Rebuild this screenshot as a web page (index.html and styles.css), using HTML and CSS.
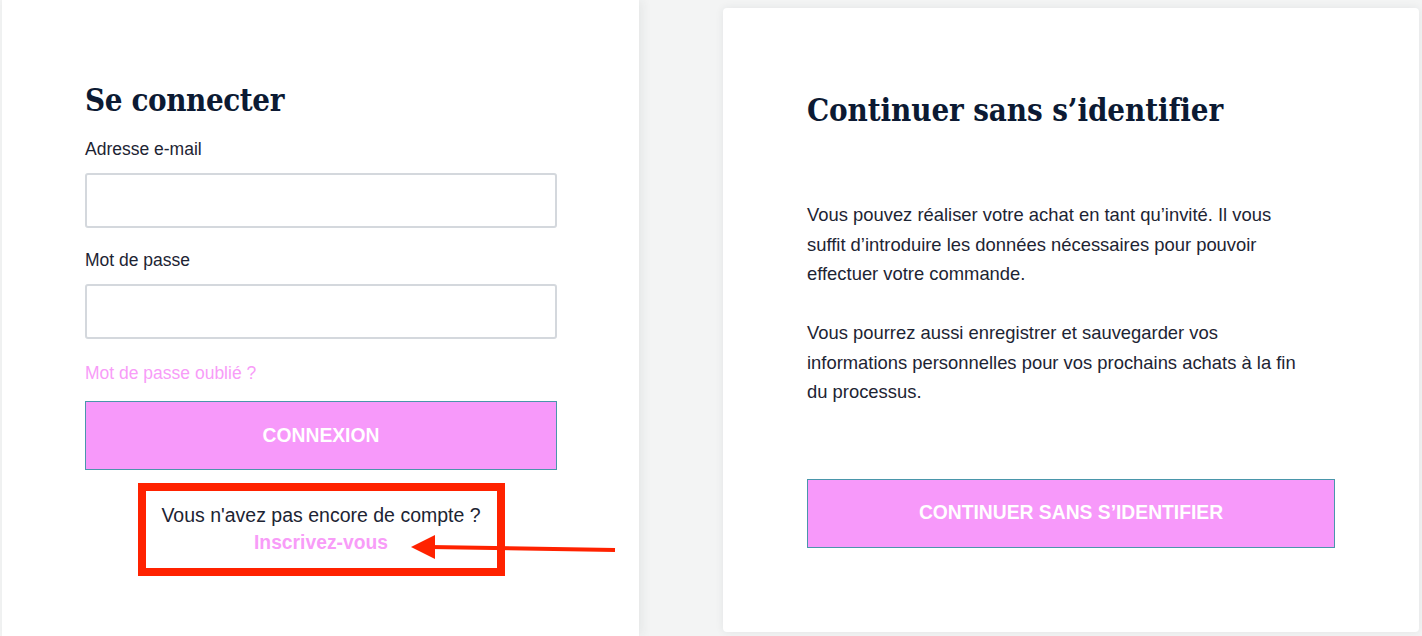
FILE: index.html
```html
<!DOCTYPE html>
<html lang="fr">
<head>
<meta charset="utf-8">
<title>Connexion</title>
<link rel="stylesheet" href="styles.css">
</head>
<body>
<div class="page">
  <section class="login">
    <div class="login-inner">
      <h2 class="title">Se connecter</h2>
      <label class="label" for="email">Adresse e-mail</label>
      <input class="field" id="email" type="email">
      <label class="label" for="pwd">Mot de passe</label>
      <input class="field" id="pwd" type="password">
      <a class="forgot" href="#">Mot de passe oublié ?</a>
      <button class="btn btn-login" type="button">CONNEXION</button>
      <div class="signup-wrap">
        <div class="signup">
          <p class="signup-text">Vous n'avez pas encore de compte ?</p>
          <a class="signup-link" href="#">Inscrivez-vous</a>
        </div>
      </div>
    </div>
    <svg class="arrow" width="220" height="30" viewBox="0 0 220 30" aria-hidden="true">
      <line x1="22" y1="14" x2="207" y2="17" stroke="#ff2200" stroke-width="4"/>
      <polygon points="3,14 27,2 27,26" fill="#ff2200"/>
    </svg>
  </section>
  <section class="guest-area">
    <div class="guest">
      <h2 class="title title-guest">Continuer sans s’identifier</h2>
      <p class="text">Vous pouvez réaliser votre achat en tant qu’invité. Il vous suffit d’introduire les données nécessaires pour pouvoir effectuer votre commande.</p>
      <p class="text">Vous pourrez aussi enregistrer et sauvegarder vos informations personnelles pour vos prochains achats à la fin du processus.</p>
      <button class="btn btn-guest" type="button">CONTINUER SANS S’IDENTIFIER</button>
    </div>
  </section>
</div>
</body>
</html>
```

FILE: styles.css
```css
* { box-sizing: border-box; }
html, body { margin: 0; padding: 0; }
body {
  background: #f3f4f4;
  font-family: "Liberation Sans", Arial, sans-serif;
  color: #1d2433;
  width: 1422px;
  height: 636px;
  overflow: hidden;
}
.page {
  display: flex;
  height: 636px;
}
.login {
  position: relative;
  width: 639px;
  margin-left: 2px;
  height: 636px;
  background: #ffffff;
  box-shadow: 3px 0 10px rgba(40, 50, 60, 0.07);
  z-index: 1;
}
.login-inner {
  display: flex;
  flex-direction: column;
  align-items: flex-start;
  width: 472px;
  margin-left: 83px;
  padding-top: 82px;
}
.title {
  margin: 0;
  font-family: "DejaVu Serif", "Liberation Serif", serif;
  font-stretch: condensed;
  font-weight: 700;
  font-size: 31px;
  line-height: 36px;
  color: #0c1a33;
  letter-spacing: -0.4px;
}
.label {
  margin-top: 19px;
  font-size: 17.5px;
  line-height: 24px;
  color: #1d2433;
}
.label + .field { margin-top: 12px; }
.field {
  display: block;
  width: 472px;
  height: 55px;
  border: 2px solid #d4d8dd;
  border-radius: 3px;
  background: #fff;
  font: inherit;
}
.field + .label { margin-top: 20px; }
.forgot {
  margin-top: 22px;
  font-size: 17.5px;
  line-height: 24px;
  color: #f89cf8;
  text-decoration: none;
}
.btn {
  display: block;
  height: 69px;
  border: 1px solid #4a96ab;
  background: #f799fa;
  color: #ffffff;
  font-family: "Liberation Sans", Arial, sans-serif;
  font-weight: 700;
  font-size: 19.3px;
  cursor: pointer;
}
.btn-login {
  width: 472px;
  margin-top: 16px;
}
.signup-wrap {
  width: 472px;
  display: flex;
  justify-content: center;
  margin-top: 13px;
}
.signup {
  border: 8px solid #ff2200;
  padding: 10px 8px 11px;
  text-align: center;
  width: 367px;
}
.signup-text {
  margin: 0;
  font-size: 19.5px;
  line-height: 28px;
  color: #1d2433;
  white-space: nowrap;
}
.signup-link {
  display: block;
  font-weight: 700;
  font-size: 19.3px;
  line-height: 28px;
  color: #f89cf8;
  text-decoration: none;
}
.arrow {
  position: absolute;
  left: 406px;
  top: 533px;
}
.guest-area {
  flex: 1;
  padding: 8px 3px 4px 84px;
}
.guest {
  height: 100%;
  background: #fff;
  border-radius: 4px;
  box-shadow: 0 0 8px rgba(40, 50, 60, 0.08);
  padding: 84px 84px 0;
}
.title-guest {
  letter-spacing: -0.1px;
}
.text {
  margin: 0;
  max-width: 500px;
  font-size: 18.4px;
  line-height: 29.5px;
  color: #1d2433;
}
.title-guest + .text { margin-top: 72px; }
.text + .text { margin-top: 29.5px; }
.btn-guest {
  width: 528px;
  margin-top: 72px;
}
```
